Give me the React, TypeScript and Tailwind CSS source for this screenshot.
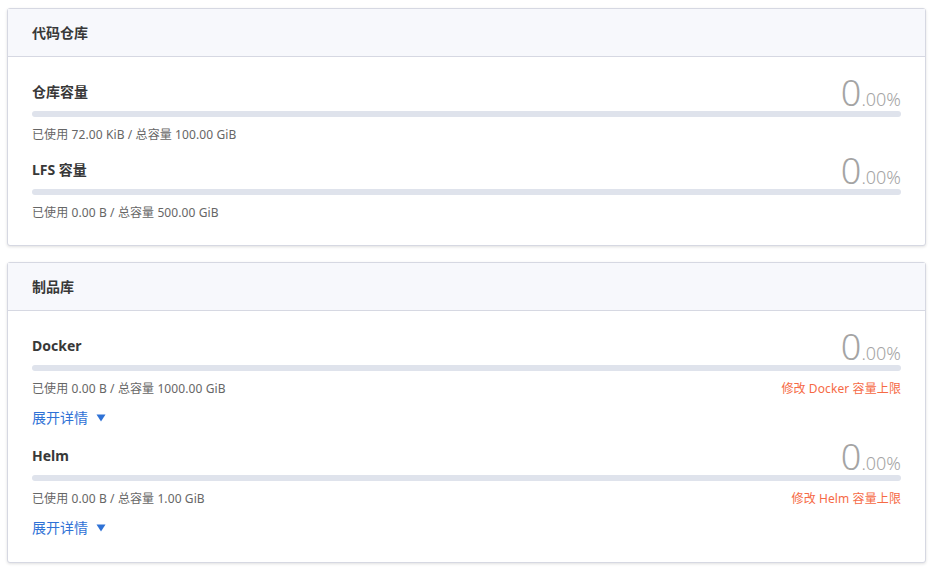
import type { ReactNode } from "react"

interface Quota {
  name: string
  used: string
  total: string
  limitLink?: string
  expandable?: boolean
}

const repoQuotas: Quota[] = [
  { name: "仓库容量", used: "72.00 KiB", total: "100.00 GiB" },
  { name: "LFS 容量", used: "0.00 B", total: "500.00 GiB" },
]

const artifactQuotas: Quota[] = [
  { name: "Docker", used: "0.00 B", total: "1000.00 GiB", limitLink: "修改 Docker 容量上限", expandable: true },
  { name: "Helm", used: "0.00 B", total: "1.00 GiB", limitLink: "修改 Helm 容量上限", expandable: true },
]

function Card({ title, compact, children }: { title: string; compact?: boolean; children: ReactNode }) {
  return (
    <section className="ml-[7px] w-[919px] rounded-[3px] border border-[#d6d8e2] bg-white shadow-[0_1px_3px_rgba(0,0,0,0.12)]">
      <header className="flex h-[48px] items-center border-b border-[#d6d8e2] bg-[#f7f8fc] px-6 text-[14px] font-bold text-[#383838]">
        {title}
      </header>
      <div className={compact ? "flex flex-col gap-[9px] px-6 pt-[18px] pb-[23px]" : "flex flex-col gap-[11px] px-6 pt-[18px] pb-[24px]"}>
        {children}
      </div>
    </section>
  )
}

function QuotaItem({ quota }: { quota: Quota }) {
  return (
    <div>
      <div className="flex items-end justify-between">
        <span className="pb-[9px] text-[14px] leading-5 font-bold text-[#383838]">{quota.name}</span>
        <span className="leading-none font-light text-[#a4a4a4]">
          <span className="text-[36px]">0</span>
          <span className="text-[18px]">.00%</span>
        </span>
      </div>
      <div className="h-1.5 w-full rounded-full bg-[#dfe3ec]" />
      <div className="mt-[9px] flex items-center justify-between text-[12px] leading-[18px] tracking-[0.1px]">
        <span className="text-[#666]">
          已使用 {quota.used} / 总容量 {quota.total}
        </span>
        {quota.limitLink && <a className="cursor-pointer text-[#f66a45]">{quota.limitLink}</a>}
      </div>
      {quota.expandable && (
        <button className="mt-[10px] flex items-center gap-2 text-[14px] leading-5 text-[#2f72d6]">
          展开详情
          <svg width="10" height="8" viewBox="0 0 10 8" className="fill-current">
            <path d="M0.5 0.5h9L5 7.5z" />
          </svg>
        </button>
      )}
    </div>
  )
}

export default function App() {
  return (
    <div
      className="min-h-[580px] w-[938px] bg-white pt-2"
      style={{ fontFamily: '"Noto Sans", "Noto Sans CJK SC", sans-serif' }}
    >
      <Card title="代码仓库" compact>
        {repoQuotas.map((q) => (
          <QuotaItem key={q.name} quota={q} />
        ))}
      </Card>
      <div className="h-4" />
      <Card title="制品库">
        {artifactQuotas.map((q) => (
          <QuotaItem key={q.name} quota={q} />
        ))}
      </Card>
    </div>
  )
}
